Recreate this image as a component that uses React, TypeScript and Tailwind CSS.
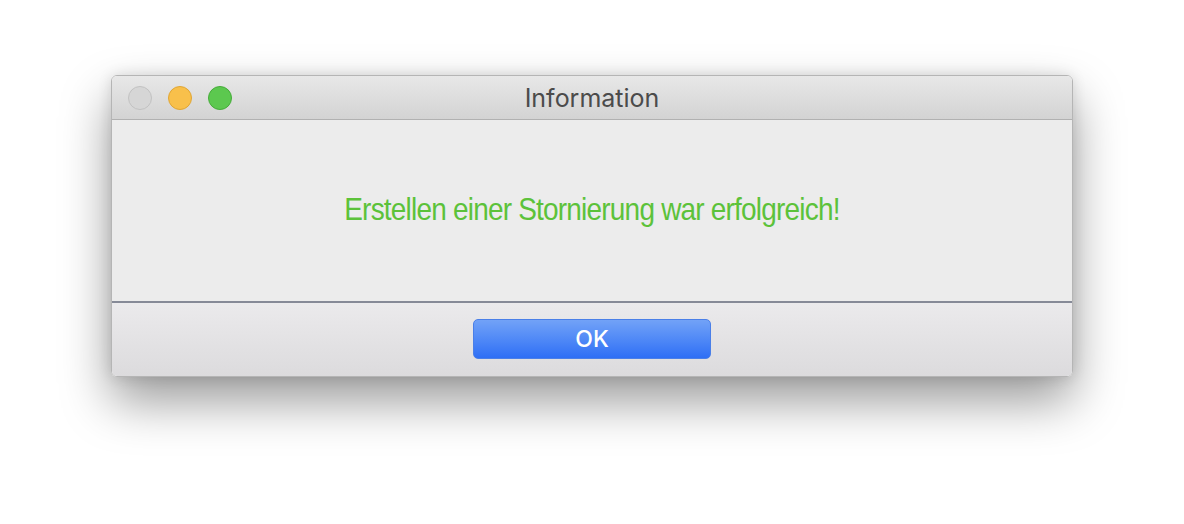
export default function App() {
  return (
    <div className="w-[1184px] h-[524px] bg-white pt-[75px] pl-[111px]" style={{ fontFamily: '"Liberation Sans", Arial, sans-serif' }}>
      <div className="w-[962px] h-[302px] rounded-[6px] flex flex-col overflow-hidden border border-[#b5b5b5] shadow-[0_24px_50px_rgba(0,0,0,0.4),0_0_14px_rgba(0,0,0,0.12)]">
        {/* title bar */}
        <div className="relative h-[44px] shrink-0 bg-gradient-to-b from-[#e8e8e8] to-[#d3d3d3] border-b border-[#b1b1b1] flex items-center justify-center">
          <div className="absolute left-[16px] top-[10px] flex gap-[16px]">
            <span className="w-[24px] h-[24px] rounded-full bg-[#d6d6d6] border border-[#c2c2c2]" />
            <span className="w-[24px] h-[24px] rounded-full bg-[#f8c04b] border border-[#e0a635]" />
            <span className="w-[24px] h-[24px] rounded-full bg-[#5cc84f] border border-[#46ac3a]" />
          </div>
          <span className="text-[25px] leading-none text-[#4b4b4b] font-['Inter',sans-serif] pt-[2px]">Information</span>
        </div>
        {/* body */}
        <div className="h-[181px] shrink-0 bg-[#ececec] flex items-center justify-center pb-[2px]">
          <span className="inline-block text-[28px] text-[#5cc23a] tracking-[-0.8px] scale-y-[1.1]">Erstellen einer Stornierung war erfolgreich!</span>
        </div>
        <div className="h-[2px] shrink-0 bg-[#868a97]" />
        {/* footer */}
        <div className="flex-1 bg-gradient-to-b from-[#ebeaec] to-[#dcdbdd] flex justify-center pt-[16px]">
          <button className="w-[238px] h-[40px] rounded-[5px] bg-gradient-to-b from-[#72a2f7] to-[#2e6ef5] border border-[#4a7fe8] text-white text-[23px] font-medium font-['Inter',sans-serif]">OK</button>
        </div>
      </div>
    </div>
  );
}
